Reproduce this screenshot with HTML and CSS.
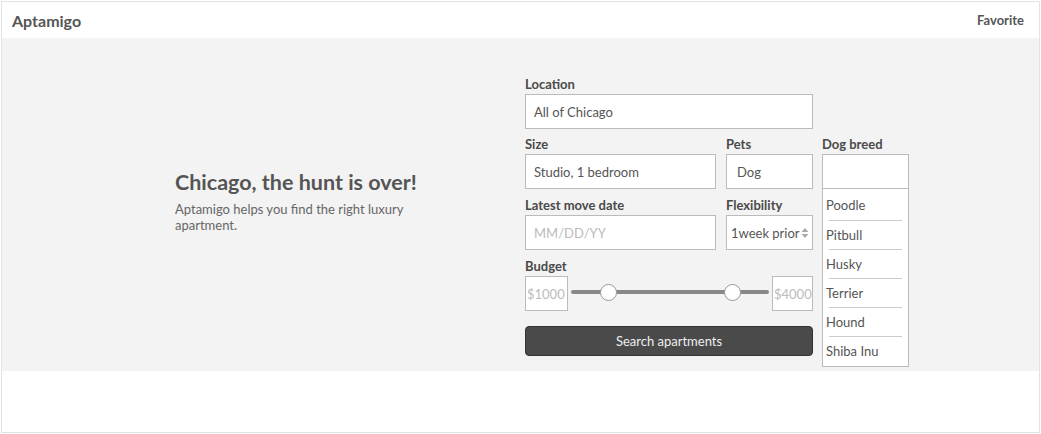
FILE: index.html
```html
<!DOCTYPE html>
<html>
<head>
<meta charset="utf-8">
<link rel="stylesheet" href="styles.css">
</head>
<body>
<div class="frame">
  <header class="topbar">
    <div class="brand">Aptamigo</div>
    <div class="fav">Favorite</div>
  </header>
  <section class="hero">
    <div class="intro">
      <h1 class="title">Chicago, the hunt is over!</h1>
      <p class="lead">Aptamigo helps you find the right luxury apartment.</p>
    </div>
    <form class="search">
      <div class="field f-location">
        <div class="label">Location</div>
        <div class="input">All of Chicago</div>
      </div>
      <div class="field f-size">
        <div class="label">Size</div>
        <div class="input">Studio, 1 bedroom</div>
      </div>
      <div class="field f-pets">
        <div class="label">Pets</div>
        <div class="input pad10">Dog</div>
      </div>
      <div class="field f-breed">
        <div class="label">Dog breed</div>
        <div class="input"></div>
        <ul class="breed-list">
          <li class="first">Poodle</li>
          <li>Pitbull</li>
          <li>Husky</li>
          <li>Terrier</li>
          <li>Hound</li>
          <li class="last">Shiba Inu</li>
        </ul>
      </div>
      <div class="field f-date">
        <div class="label">Latest move date</div>
        <div class="input placeholder">MM/DD/YY</div>
      </div>
      <div class="field f-flex">
        <div class="label">Flexibility</div>
        <div class="input select">
          <span>1week prior</span>
          <svg class="updown" width="8" height="12" viewBox="0 0 8 12"><path d="M4 1 L7.5 5 H0.5 Z M4 11 L7.5 7 H0.5 Z" fill="#aaa"/></svg>
        </div>
      </div>
      <div class="field f-budget">
        <div class="label">Budget</div>
        <div class="budget">
          <div class="input money">$1000</div>
          <div class="slider">
            <div class="track"></div>
            <div class="thumb t1"></div>
            <div class="thumb t2"></div>
          </div>
          <div class="input money right">$4000</div>
        </div>
      </div>
      <button type="button" class="go">Search apartments</button>
    </form>
  </section>
  <div class="rest"></div>
</div>
</body>
</html>
```

FILE: styles.css
```css
* { box-sizing: border-box; }
html, body { margin: 0; padding: 0; background: #fff; }
body { font-family: Lato, "Open Sans", sans-serif; color: #555; }

.frame {
  margin: 1px;
  width: 1039px;
  height: 432px;
  border: 1px solid #e3e3e3;
  background: #fff;
  display: flex;
  flex-direction: column;
}

.topbar {
  height: 36px;
  display: flex;
  align-items: center;
  justify-content: space-between;
  padding: 0 15px 0 10px;
  background: #fff;
}
.brand { font-size: 16px; font-weight: 700; color: #555; }
.fav { font-size: 13px; font-weight: 700; color: #555; }

.hero {
  height: 333px;
  background: #f3f3f3;
  display: grid;
  grid-template-columns: 350px 1fr;
  padding-left: 173px;
}
.intro { align-self: center; margin-top: -8px; }
.title {
  margin: 0 0 6px;
  font-size: 21.5px;
  font-weight: 700;
  color: #555;
  line-height: 26px;
}
.lead {
  margin: 0;
  font-size: 13px;
  line-height: 16px;
  color: #666;
  max-width: 245px;
}

.search {
  padding-top: 38px;
  display: grid;
  grid-template-columns: 191px 87px 87px;
  column-gap: 10px;
  row-gap: 8px;
  align-content: start;
}
.f-location { grid-column: 1 / 3; grid-row: 1; margin-bottom: -1px; }
.f-size { grid-column: 1; grid-row: 2; }
.f-pets { grid-column: 2; grid-row: 2; }
.f-breed { grid-column: 3; grid-row: 2; margin-left: -1px; width: 87px; }
.f-date { grid-column: 1; grid-row: 3; }
.f-flex { grid-column: 2; grid-row: 3; }
.f-budget { grid-column: 1 / 3; grid-row: 4; }
.go { grid-column: 1 / 3; grid-row: 5; }

.field { position: relative; }
.label {
  font-size: 13px;
  font-weight: 700;
  line-height: 16px;
  color: #4a4a4a;
  margin-bottom: 2px;
}
.input {
  height: 35px;
  border: 1px solid #bbb;
  background: #fff;
  font-size: 13px;
  color: #555;
  display: flex;
  align-items: center;
  padding-left: 8px;
  white-space: nowrap;
}
.pad10 { padding-left: 10px; }
.placeholder { color: #bbb; }
.select { padding-left: 4px; padding-right: 3px; justify-content: space-between; }
.updown { flex: none; }

.breed-list {
  position: absolute;
  left: 0;
  top: 53px;
  width: 87px;
  margin: 0;
  padding: 0;
  list-style: none;
  background: #fff;
  border: 1px solid #bbb;
  border-top: none;
  z-index: 2;
}
.breed-list li {
  position: relative;
  height: 29px;
  line-height: 29px;
  font-size: 13px;
  color: #555;
  padding-left: 3px;
}
.breed-list li.first { height: 32px; line-height: 32px; }
.breed-list li::after {
  content: "";
  position: absolute;
  left: 6px;
  right: 6px;
  bottom: 0;
  height: 1px;
  background: #ccc;
}
.breed-list li.last::after { display: none; }

.budget { display: flex; align-items: center; }
.money {
  width: 43px;
  padding-left: 1px;
  color: #bbb;
  font-size: 13px;
}
.money.right { width: 41px; }
.slider {
  position: relative;
  flex: 1;
  height: 35px;
  margin: 0 3px;
}
.track {
  position: absolute;
  left: 0;
  right: 0;
  top: 14px;
  height: 4px;
  border-radius: 2px;
  background: #888;
}
.thumb {
  position: absolute;
  top: 8px;
  width: 17px;
  height: 17px;
  border-radius: 50%;
  background: #fff;
  border: 1px solid #999;
}
.t1 { left: 29px; }
.t2 { left: 153px; }

.go {
  margin-top: 7px;
  height: 30px;
  border: 1px solid #333;
  border-radius: 4px;
  background: #4a4a4a;
  color: #eee;
  font-family: Lato, "Open Sans", sans-serif;
  font-size: 13px;
  padding: 0;
}

.rest { flex: 1; background: #fff; }
```
